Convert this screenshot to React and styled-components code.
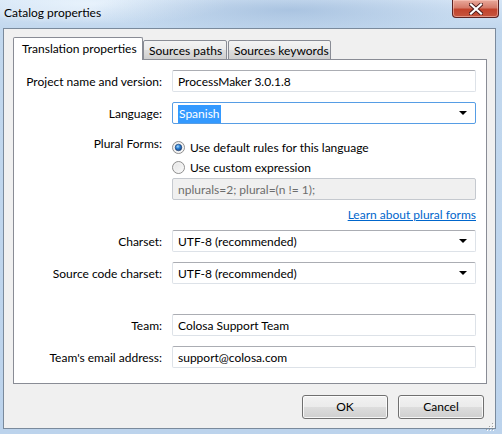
import styled, { createGlobalStyle } from "styled-components";

const GlobalStyle = createGlobalStyle`
    html, body {
        margin: 0;
        padding: 0;
        background: #c4d9ef;
    }
    body {
        font-family: "Lato", "Open Sans", "Liberation Sans", sans-serif;
        font-size: 12px;
        color: #000;
    }
`;

const Window = styled.div`
    width: 502px;
    height: 434px;
    box-sizing: border-box;
    display: flex;
    flex-direction: column;
    background:
        radial-gradient(ellipse 200px 24px at 290px 10px, rgba(140, 172, 210, 0.55), transparent),
        radial-gradient(ellipse 140px 20px at 90px 4px, rgba(240, 248, 255, 0.7), transparent),
        linear-gradient(to bottom, #d6e6f6 0px, #c2d8ee 28px, #bcd3ec 100%);
`;

const TitleBar = styled.div`
    height: 28px;
    flex: none;
    display: flex;
    justify-content: space-between;
    align-items: flex-start;
    padding-left: 4px;
`;

const TitleText = styled.div`
    line-height: 26px;
    color: #000;
    text-shadow: 0 0 6px rgba(255, 255, 255, 0.9);
`;

const CloseButton = styled.div`
    width: 47px;
    height: 18px;
    margin-right: 3px;
    box-sizing: border-box;
    border: 1px solid #5b2323;
    border-top: none;
    border-radius: 0 0 4px 4px;
    background: linear-gradient(to bottom, #e9a99b 0%, #d57b6a 45%, #c2432c 55%, #c6553e 100%);
    box-shadow: inset 0 0 0 1px rgba(255, 210, 200, 0.5);
    display: flex;
    align-items: center;
    justify-content: center;
`;

const Client = styled.div`
    flex: 1;
    margin: 0 6px 5px 3px;
    border: 1px solid #7a8a9c;
    background: #f0f0f0;
    padding: 8px 8px 0 9px;
    display: flex;
    flex-direction: column;
    position: relative;
`;

const TabRow = styled.div`
    display: flex;
    align-items: flex-end;
    height: 23px;
    margin-bottom: -1px;
    position: relative;
    z-index: 1;
`;

const Tab = styled.div`
    box-sizing: border-box;
    width: ${p => p.$width}px;
    height: ${p => (p.$active ? 23 : 20)}px;
    margin-left: ${p => p.$ml || 0}px;
    border: 1px solid #898c95;
    border-bottom: ${p => (p.$active ? "none" : "1px solid #898c95")};
    border-radius: 2px 2px 0 0;
    background: ${p => (p.$active ? "#fff" : "linear-gradient(to bottom, #f3f3f3, #ebebeb 50%, #dddddd 51%, #cfcfcf)")};
    display: flex;
    align-items: center;
    padding-left: ${p => p.$pl}px;
    padding-bottom: ${p => (p.$active ? 2 : 0)}px;
    white-space: nowrap;
`;

const Panel = styled.div`
    height: 325px;
    box-sizing: border-box;
    flex: none;
    background: #fff;
    border: 1px solid #898c95;
    padding: 10px 10px 0 0;
    display: flex;
    flex-direction: column;
`;

const Row = styled.div`
    display: grid;
    grid-template-columns: 148px 304px;
    column-gap: 10px;
    margin-top: ${p => p.$mt || 0}px;
    align-items: ${p => p.$top ? "start" : "center"};
`;

const Label = styled.div`
    text-align: right;
    white-space: nowrap;
    margin-top: ${p => p.$mt || 0}px;
`;

const TextBox = styled.div`
    height: 22px;
    box-sizing: border-box;
    border: 1px solid #dde2e8;
    border-top-color: #abadb3;
    border-radius: 2px;
    background: ${p => (p.$disabled ? "#f0f0f0" : "#fff")};
    border-color: ${p => (p.$disabled ? "#c5c9cf" : p.$focus ? "#569de5" : "")};
    color: ${p => (p.$disabled ? "#6d6d6d" : "#000")};
    display: flex;
    align-items: center;
    justify-content: space-between;
    padding: 0 6px 0 5px;
    margin-top: ${p => p.$mt || 0}px;
    white-space: nowrap;
`;

const Selected = styled.span`
    background: #3399ff;
    color: #fff;
    padding: 1px 1px 2px;
`;

const Arrow = styled.span`
    width: 0;
    height: 0;
    border-left: 4px solid transparent;
    border-right: 4px solid transparent;
    border-top: 4px solid #000;
    margin-right: 2px;
`;

const Options = styled.div`
    display: flex;
    flex-direction: column;
`;

const RadioRow = styled.label`
    height: 20px;
    display: flex;
    align-items: center;
    gap: 5px;
`;

const LinkRow = styled.div`
    display: flex;
    justify-content: flex-end;
    height: 16px;
    align-items: center;
`;

const Link = styled.a`
    color: #0066cc;
    text-decoration: underline;
    cursor: pointer;
`;

const ButtonRow = styled.div`
    display: flex;
    justify-content: flex-end;
    gap: 10px;
    margin-top: 11px;
    padding-right: 3px;
`;

const Button = styled.button`
    width: 86px;
    height: 24px;
    box-sizing: border-box;
    border: 1px solid #707070;
    border-radius: 3px;
    background: linear-gradient(to bottom, #f2f2f2 0%, #ebebeb 50%, #dddddd 51%, #cfcfcf 100%);
    box-shadow: inset 0 0 0 1px rgba(255, 255, 255, 0.8);
    font: inherit;
    color: #000;
    padding: 0 0 1px;
`;

const Grip = styled.div`
    position: absolute;
    right: 1px;
    bottom: 1px;
    width: 8px;
    height: 8px;
`;

function Radio({ checked }) {
    return (
        <svg width="13" height="13" viewBox="0 0 13 13">
            <defs>
                <linearGradient id={checked ? "rb1" : "rb0"} x1="0" y1="0" x2="1" y2="1">
                    <stop offset="0" stopColor="#e2e2e2" />
                    <stop offset="1" stopColor="#fbfbfb" />
                </linearGradient>
                <radialGradient id="rdot" cx="0.4" cy="0.35" r="0.7">
                    <stop offset="0" stopColor="#a6dcff" />
                    <stop offset="0.45" stopColor="#2a7fd4" />
                    <stop offset="1" stopColor="#163f78" />
                </radialGradient>
            </defs>
            <circle cx="6.5" cy="6.5" r="6" fill={`url(#${checked ? "rb1" : "rb0"})`} stroke="#8f8f8f" />
            <circle cx="6.5" cy="6.5" r="4.5" fill="none" stroke="#f4f4f4" strokeWidth="0.8" />
            {checked && <circle cx="6.5" cy="6.5" r="3.3" fill="url(#rdot)" stroke="#1d3a6b" strokeWidth="0.6" />}
        </svg>
    );
}

function CloseX() {
    return (
        <svg width="14" height="12" viewBox="0 0 14 12">
            <path d="M2 1.5 L12 10.5 M12 1.5 L2 10.5" stroke="#4a1a1a" strokeWidth="4" strokeLinecap="square" />
            <path d="M2 1.5 L12 10.5 M12 1.5 L2 10.5" stroke="#fff" strokeWidth="2.2" strokeLinecap="square" />
        </svg>
    );
}

function SizeGrip() {
    const dots = [[6, 0], [3, 3], [6, 3], [0, 6], [3, 6], [6, 6]];
    return (
        <Grip>
            <svg width="8" height="8" viewBox="0 0 8 8">
                {dots.map(([x, y], i) => (
                    <g key={i}>
                        <rect x={x + 1} y={y + 1} width="1" height="1" fill="#fff" />
                        <rect x={x} y={y} width="1" height="1" fill="#a0a0a0" />
                    </g>
                ))}
            </svg>
        </Grip>
    );
}

export default function App() {
    return (
        <>
            <GlobalStyle />
            <Window>
                <TitleBar>
                    <TitleText>Catalog properties</TitleText>
                    <CloseButton><CloseX /></CloseButton>
                </TitleBar>
                <Client>
                    <TabRow>
                        <Tab $active $width={130} $pl={8}>Translation properties</Tab>
                        <Tab $width={84} $pl={5}>Sources paths</Tab>
                        <Tab $width={103} $pl={5} $ml={1}>Sources keywords</Tab>
                    </TabRow>
                    <Panel>
                        <Row>
                            <Label>Project name and version:</Label>
                            <TextBox>ProcessMaker 3.0.1.8</TextBox>
                        </Row>
                        <Row $mt={10}>
                            <Label>Language:</Label>
                            <TextBox $focus>
                                <span><Selected>Spanish</Selected></span>
                                <Arrow />
                            </TextBox>
                        </Row>
                        <Row $mt={13} $top>
                            <Label $mt={-1}>Plural Forms:</Label>
                            <Options>
                                <RadioRow><Radio checked />Use default rules for this language</RadioRow>
                                <RadioRow><Radio />Use custom expression</RadioRow>
                                <TextBox $disabled $mt={1}>nplurals=2; plural=(n != 1);</TextBox>
                            </Options>
                        </Row>
                        <Row $mt={6}>
                            <span />
                            <LinkRow>
                                <Link>Learn about plural forms</Link>
                            </LinkRow>
                        </Row>
                        <Row $mt={8}>
                            <Label>Charset:</Label>
                            <TextBox>
                                <span>UTF-8 (recommended)</span>
                                <Arrow />
                            </TextBox>
                        </Row>
                        <Row $mt={10}>
                            <Label>Source code charset:</Label>
                            <TextBox>
                                <span>UTF-8 (recommended)</span>
                                <Arrow />
                            </TextBox>
                        </Row>
                        <Row $mt={30}>
                            <Label>Team:</Label>
                            <TextBox>Colosa Support Team</TextBox>
                        </Row>
                        <Row $mt={10}>
                            <Label>Team's email address:</Label>
                            <TextBox>support@colosa.com</TextBox>
                        </Row>
                    </Panel>
                    <ButtonRow>
                        <Button>OK</Button>
                        <Button>Cancel</Button>
                    </ButtonRow>
                    <SizeGrip />
                </Client>
            </Window>
        </>
    );
}
